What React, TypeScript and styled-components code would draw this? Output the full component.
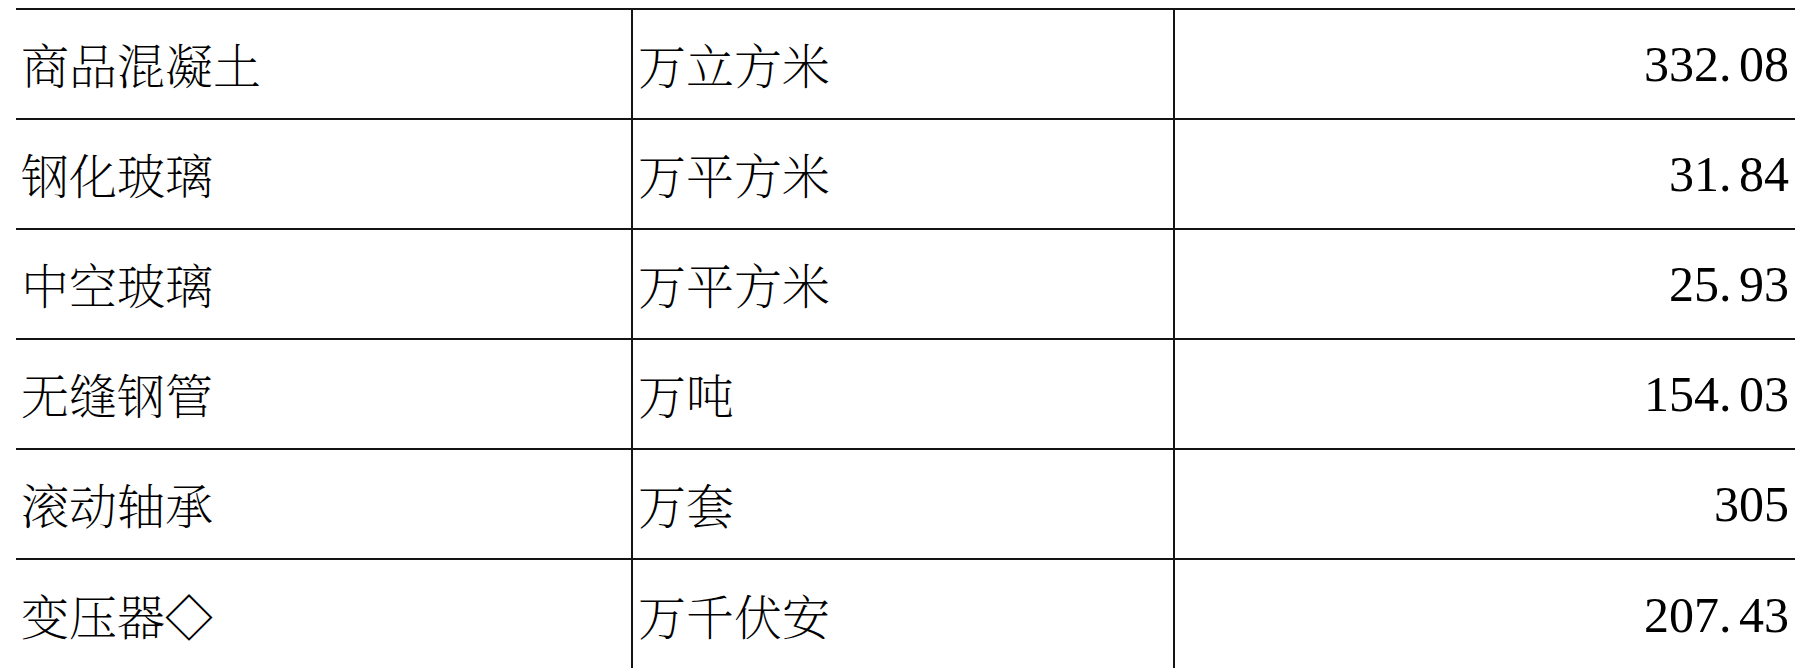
import styled, { createGlobalStyle } from "styled-components";

const GlobalStyle = createGlobalStyle`
  html, body {
    margin: 0;
    padding: 0;
    background: #ffffff;
  }
`;

const rows = [
  { name: "商品混凝土", unit: "万立方米", value: "332.08" },
  { name: "钢化玻璃", unit: "万平方米", value: "31.84" },
  { name: "中空玻璃", unit: "万平方米", value: "25.93" },
  { name: "无缝钢管", unit: "万吨", value: "154.03" },
  { name: "滚动轴承", unit: "万套", value: "305" },
  { name: "变压器◇", unit: "万千伏安", value: "207.43" },
];

// the period sits in a full digit cell, as in the source document
const renderValue = (v: string) => {
  const [int, frac] = v.split(".");
  if (frac === undefined) return int;
  return (
    <>
      {int}
      <Dot>.</Dot>
      {frac}
    </>
  );
};

const App = () => {
  return (
    <Page>
      <GlobalStyle />
      <Table>
        <colgroup>
          <col style={{ width: 616 }} />
          <col style={{ width: 542 }} />
          <col style={{ width: 621 }} />
        </colgroup>
        <tbody>
          {rows.map((r) => (
            <Row key={r.name}>
              <TextCell>{r.name}</TextCell>
              <TextCell divided>{r.unit}</TextCell>
              <NumCell>{renderValue(r.value)}</NumCell>
            </Row>
          ))}
        </tbody>
      </Table>
    </Page>
  );
};

export default App;

const Page = styled.div`
  width: 1805px;
  height: 668px;
  overflow: hidden;
  padding: 8px 0 0 16px;
  box-sizing: border-box;
  background: #ffffff;
`;

const Table = styled.table`
  width: 1779px;
  border-collapse: collapse;
  table-layout: fixed;
`;

const Row = styled.tr`
  height: 110px;
`;

const TextCell = styled.td<{ divided?: boolean }>`
  border-top: 2px solid #141414;
  border-left: ${({ divided }) => (divided ? "2px solid #141414" : "none")};
  padding: 0 0 0 5px;
  vertical-align: middle;
  font-family: "Noto Serif CJK SC", "Noto Sans CJK SC", sans-serif;
  font-weight: 200;
  font-size: 48px;
  line-height: 1;
  color: #000000;
  white-space: nowrap;
`;

const NumCell = styled.td`
  border-top: 2px solid #141414;
  border-left: 2px solid #141414;
  padding: 0 6px 0 0;
  text-align: right;
  vertical-align: middle;
  font-family: "Liberation Serif", "Tinos", "DejaVu Serif", serif;
  font-size: 50px;
  line-height: 1;
  color: #000000;
  white-space: nowrap;
`;

const Dot = styled.span`
  display: inline-block;
  width: 20px;
  text-align: left;
`;
